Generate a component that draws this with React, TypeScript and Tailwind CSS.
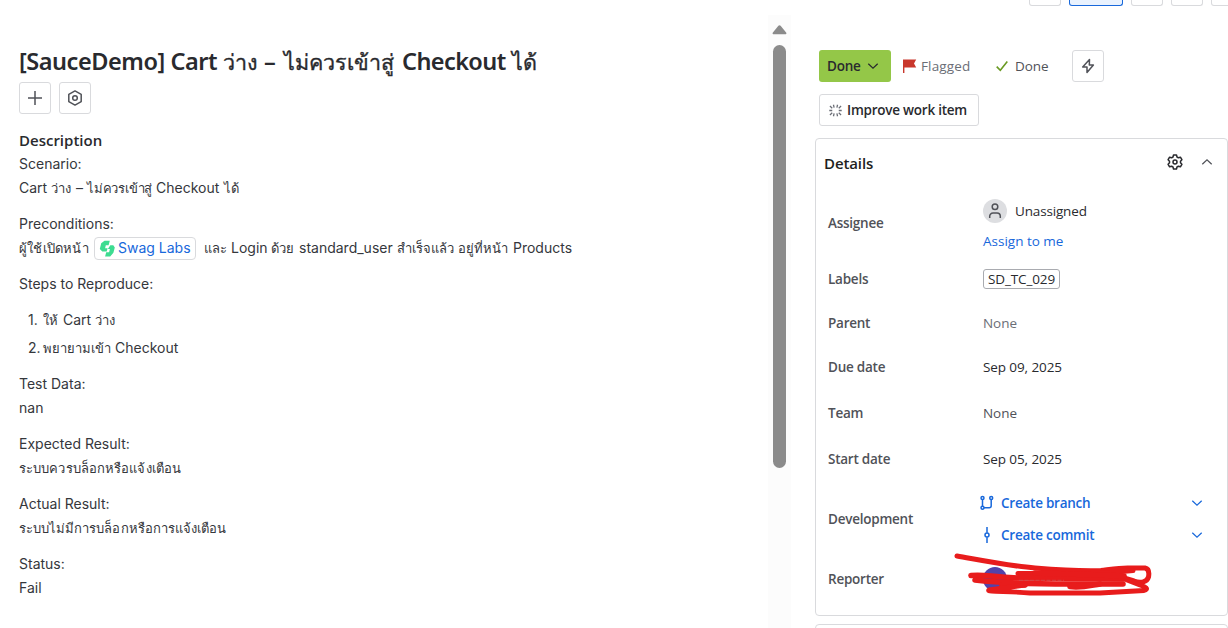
import type { ReactNode } from "react";

const ui = "font-['Open_Sans',sans-serif] text-[13.5px] tracking-[-0.04px]";
const strong = "font-['Open_Sans',sans-serif] text-[13.5px] font-semibold tracking-[-0.24px]";

function W({ w, th, children }: { w: string; th?: boolean; children: ReactNode }) {
  return (
    <span className={`inline-block whitespace-nowrap ${w} ${th ? "text-[13px] leading-none" : ""}`}>
      {children}
    </span>
  );
}

function Line({ children }: { children: ReactNode }) {
  return <p className="h-6 whitespace-nowrap leading-6">{children}</p>;
}

function TitleThai({ w, children }: { w: string; children: ReactNode }) {
  return (
    <span className={`inline-block whitespace-nowrap text-[21.5px] font-normal leading-none tracking-normal [-webkit-text-stroke:0.35px_#292a2e] ${w}`}>
      {children}
    </span>
  );
}

function Chevron({ up, className = "" }: { up?: boolean; className?: string }) {
  return (
    <svg viewBox="0 0 12 12" className={`size-3 ${className}`} fill="none" stroke="currentColor" strokeWidth="1.2">
      <path d={up ? "M1.3 8.3 6 3.8l4.700 4.500" : "M1.3 3.7 6 8.2l4.700-4.500"} />
    </svg>
  );
}

function Row({ label, h, children }: { label: string; h: string; children: ReactNode }) {
  return (
    <div className={`flex items-center ${h}`}>
      <div className={`w-[155px] shrink-0 text-[#505258] ${strong}`}>{label}</div>
      <div className={`min-w-0 flex-1 text-[#292a2e] ${ui}`}>{children}</div>
    </div>
  );
}

function Main() {
  return (
    <main className="w-[768px] shrink-0 pl-[19px] pt-[45px] font-['Inter',sans-serif] text-[14px] text-[#35373c]">
      <h1 className="h-8 whitespace-nowrap font-['Noto_Sans',sans-serif] text-[23.5px] font-semibold leading-8 tracking-[-0.45px] text-[#292a2e]">
        <span className="inline-block w-[204px]">[SauceDemo] Cart</span>
        <TitleThai w="w-[41px]">ว่าง</TitleThai>
        <span className="inline-block w-[20px]">–</span>
        <TitleThai w="w-[118px]">ไม่ควรเข้าสู่</TitleThai>
        <span className="inline-block w-[110px] tracking-[-0.6px]">Checkout</span>
        <TitleThai w="w-[30px]">ได้</TitleThai>
      </h1>
      <div className="mt-[5px] flex gap-2 text-[#505258]">
        <button className="flex size-8 items-center justify-center rounded-[3px] border border-[#d9dadd]">
          <svg viewBox="0 0 16 16" className="size-4" stroke="currentColor" strokeWidth="1.5">
            <path d="M8 1v14M1 8h14" />
          </svg>
        </button>
        <button className="flex size-8 items-center justify-center rounded-[3px] border border-[#d9dadd]">
          <svg viewBox="0 0 16 16" className="size-4" fill="none" stroke="currentColor" strokeWidth="1.5" strokeLinejoin="round">
            <path d="M8 .9 14.2 4.4v7.2L8 15.1 1.8 11.6V4.4z" />
            <circle cx="8" cy="8" r="2.3" />
          </svg>
        </button>
      </div>
      <h2 className="mt-[14px] h-6 font-['Open_Sans',sans-serif] text-[15px] font-semibold leading-6 text-[#292a2e]">Description</h2>
      <div>
        <Line>Scenario:</Line>
        <Line>
          <W w="w-[32px]">Cart</W>
          <W w="w-[25px]" th>ว่าง</W>
          <W w="w-[11px]">–</W>
          <span className="inline-block w-[69px] text-[13px] leading-none tracking-[-0.2px]">ไม่ควรเข้าสู่</span>
          <W w="w-[68px]">Checkout</W>
          <W w="w-[18px]" th>ได้</W>
        </Line>
      </div>
      <div className="mt-3">
        <Line>Preconditions:</Line>
        <div className="flex h-6 items-center whitespace-nowrap leading-6">
          <span className="inline-block w-[75px] text-[13px] leading-none tracking-[0.2px]">ผู้ใช้เปิดหน้า</span>
          <a className="flex h-[23px] w-[102px] items-center rounded-[4px] border border-[#d9dadd] pl-[4px] text-[#1868db]">
            <svg viewBox="0 0 17 17" className="mr-[2px] size-[17px] shrink-0 fill-[#3ddc91]">
              <path d="M5.500.8h5.300L9.600 5.200H6.800L6.100 8.200H8.600L7.700 11.600H3.300L.8 9 2.200 3.200z" />
              <path d="M11.300 5.200h3l1.500 2.200-1.400 5.300-3.200 3.800H6.100l1.100-4.300h2.900l.8-3.200H8.900z" />
            </svg>
            Swag Labs
          </a>
          <p className="ml-2">
            <W w="w-[27px]" th>และ</W>
            <W w="w-[40px]">Login</W>
            <W w="w-[28px]" th>ด้วย</W>
            <W w="w-[98px]">standard_user</W>
            <W w="w-[61px]" th>สำเร็จแล้ว</W>
            <W w="w-[55px]" th>อยู่ที่หน้า</W>
            <W w="w-[60px]">Products</W>
          </p>
        </div>
      </div>
      <div className="mt-3"><Line>Steps to Reproduce:</Line></div>
      <ol className="mt-3 pl-[9px]">
        <li className="flex h-6 items-baseline whitespace-nowrap leading-6">
          <W w="w-[15px]">1.</W>
          <W w="w-[20px]" th>ให้</W>
          <W w="w-[32px]">Cart</W>
          <W w="w-[22px]" th>ว่าง</W>
        </li>
        <li className="mt-1 flex h-6 items-baseline whitespace-nowrap leading-6">
          <W w="w-[15px]">2.</W>
          <W w="w-[72px]" th>พยายามเข้า</W>
          <W w="w-[64px]">Checkout</W>
        </li>
      </ol>
      <div className="mt-3"><Line>Test Data:</Line><Line>nan</Line></div>
      <div className="mt-3">
        <Line>Expected Result:</Line>
        <Line><span className="inline-block text-[13px] leading-none tracking-[0.1px]">ระบบควรบล็อกหรือแจ้งเตือน</span></Line>
      </div>
      <div className="mt-3">
        <Line>Actual Result:</Line>
        <Line><span className="inline-block text-[13px] leading-none tracking-[0.04px]">ระบบไม่มีการบล็อกหรือการแจ้งเตือน</span></Line>
      </div>
      <div className="mt-3"><Line>Status:</Line><Line>Fail</Line></div>
    </main>
  );
}

function ScrollTrack() {
  return (
    <div className="mt-[15px] flex w-[23px] shrink-0 flex-col items-center bg-[#fcfcfc] pt-[10px]">
      <svg viewBox="0 0 15 10" className="h-[10px] w-[15px] shrink-0 fill-[#8b8b8b]">
        <path d="M6.4.8a1.5 1.5 0 0 1 2.2 0l5.500 6.600c.7.9.2 1.800-.9 1.800H1.800C.7 9.200.2 8.300.9 7.400z" />
      </svg>
      <div className="mt-[10px] h-[423px] w-[13px] shrink-0 rounded-full bg-[#8b8b8b]" />
    </div>
  );
}

function TopButtons() {
  return (
    <div className="ml-[214px] flex h-[6px] gap-2">
      <div className="w-8 shrink-0 rounded-b-[3px] border border-t-0 border-[#d9dadd]" />
      <div className="w-[54px] shrink-0 rounded-b-[3px] border border-t-0 border-[#1868db] bg-[#e9f2fe]" />
      <div className="w-8 shrink-0 rounded-b-[3px] border border-t-0 border-[#d9dadd]" />
      <div className="w-8 shrink-0 rounded-b-[3px] border border-t-0 border-[#d9dadd]" />
      <div className="w-8 shrink-0 rounded-b-[3px] border border-t-0 border-[#d9dadd]" />
    </div>
  );
}

function StatusBar() {
  return (
    <div className="ml-1 mt-[44px]">
      <div className="flex h-8 items-center">
        <button className={`flex h-8 w-[72px] items-center rounded-[3px] bg-[#94c748] pl-2 text-[#292a2e] ${strong}`}>
          Done
          <Chevron className="ml-[6px]" />
        </button>
        <svg viewBox="0 0 14 15" className="ml-[12px] h-[15px] w-[14px] fill-[#c9372c]">
          <path d="M0 .5h13.200L11 4.500l2.200 3.900H1.400V14H0z" />
        </svg>
        <span className="ml-[4px] w-[75px] font-['Open_Sans',sans-serif] text-[13.5px] tracking-[0.15px] text-[#6b6e76]">Flagged</span>
        <svg viewBox="0 0 12 12" className="size-3 text-[#6a9a23]" fill="none" stroke="currentColor" strokeWidth="1.6">
          <path d="M.7 6.600 4.300 10.300 11.300 1.400" />
        </svg>
        <span className={`ml-[7px] w-[57px] text-[#505258] ${ui}`}>Done</span>
        <button className="flex size-8 items-center justify-center rounded-[3px] border border-[#d9dadd] text-[#505258]">
          <svg viewBox="0 0 16 16" className="size-4" fill="none" stroke="currentColor" strokeWidth="1.5" strokeLinejoin="round">
            <path d="M9.500 1.400 2.700 9H7v5.600L13.400 7.100H9.300z" />
          </svg>
        </button>
      </div>
      <button className={`mt-3 flex h-8 w-[160px] items-center rounded-[3px] border border-[#d9dadd] pl-[9px] text-[#292a2e] ${strong}`}>
        <svg viewBox="0 0 14 14" className="mr-[5px] size-[13px] text-[#6b6e76]" stroke="currentColor" strokeWidth="1.4">
          <path d="M4.800.8 5.500 4M9.200.8 8.500 4M4.800 13.200 5.500 10M9.200 13.200 8.500 10M1 2.200l2.500 2.300M13 2.200l-2.500 2.300M1 11.800l2.500-2.300M13 11.800l-2.500-2.300M.3 7h3.200M10.500 7h3.200" />
        </svg>
        Improve work item
      </button>
    </div>
  );
}

function DevLink({ label, children }: { label: string; children: ReactNode }) {
  return (
    <div className={`flex h-8 items-center text-[#1868db] ${strong}`}>
      <svg viewBox="0 0 16 16" className="-ml-1 mr-[6px] size-4" fill="none" stroke="currentColor" strokeWidth="1.5">
        {children}
      </svg>
      {label}
      <Chevron className="ml-auto mr-[24px]" />
    </div>
  );
}

function Details() {
  return (
    <section className="mt-3 h-[478px] w-[413px] rounded-[4px] border border-[#d9dadd] pl-3">
      <header className="flex h-14 items-center pb-[10px] text-[#292a2e]">
        <h2 className="-ml-1 mt-[2px] font-['Open_Sans',sans-serif] text-[15px] font-semibold tracking-[-0.1px] text-[#1e1f21]">Details</h2>
        <svg viewBox="0 0 16 16" className="ml-auto mr-[18px] size-4" fill="none" stroke="currentColor" strokeWidth="1.5" strokeLinejoin="round">
          <path d="M6.500 1h3l.5 2 1.400.8 2-.6 1.500 2.500L13.500 7.200v1.600l1.400 1.500-1.500 2.500-2-.6-1.400.8-.5 2h-3L6 13l-1.400-.8-2 .6-1.500-2.500L2.500 8.800V7.200L1.100 5.700l1.500-2.500 2 .6L6 3z" />
          <circle cx="8" cy="8" r="2" />
        </svg>
        <Chevron up className="mr-[14px] text-[#505258]" />
      </header>
      <Row label="Assignee" h="h-14">
        <div className="mt-1 flex h-6 items-center">
          <span className="mr-2 flex size-6 items-center justify-center rounded-full bg-[#dddee1] text-[#505258]">
            <svg viewBox="0 0 16 16" className="size-4" fill="none" stroke="currentColor" strokeWidth="1.5">
              <circle cx="8" cy="3.800" r="2.800" />
              <path d="M2.700 15v-1.700A3.300 3.300 0 0 1 6 10h4a3.300 3.300 0 0 1 3.300 3.300V15" />
            </svg>
          </span>
          <span className="tracking-[-0.16px]">Unassigned</span>
        </div>
        <a className="mt-2 block h-5 leading-5 tracking-normal text-[#1868db]">Assign to me</a>
      </Row>
      <Row label="Labels" h="h-14">
        <span className="flex h-5 w-[77px] items-center rounded-[3px] border border-[#a9abb0] pl-1 tracking-[-0.12px]">SD_TC_029</span>
      </Row>
      <Row label="Parent" h="h-8"><span className="text-[#6b6e76]">None</span></Row>
      <Row label="Due date" h="h-14"><span className="tracking-[-0.1px]">Sep 09, 2025</span></Row>
      <Row label="Team" h="h-9"><span className="text-[#505258]">None</span></Row>
      <Row label="Start date" h="h-14"><span className="tracking-[-0.1px]">Sep 05, 2025</span></Row>
      <Row label="Development" h="h-16">
        <DevLink label="Create branch">
          <circle cx="3.500" cy="3" r="1.500" />
          <circle cx="12.200" cy="3" r="1.500" />
          <circle cx="3.500" cy="12.700" r="1.500" />
          <path d="M3.500 4.500v6.700M12.200 4.500v6.200a2 2 0 0 1-2 2H5" />
        </DevLink>
        <DevLink label="Create commit">
          <path d="M8 0v5.700M8 10.300V16" />
          <circle cx="8" cy="8" r="2" />
        </DevLink>
      </Row>
      <Row label="Reporter" h="h-14">
        <div className="relative h-6">
          <div className="size-6 rounded-full bg-[#5243aa]" />
          <svg viewBox="950 550 210 50" className="absolute left-[-33px] top-[-17px] h-[50px] w-[210px]" fill="none" stroke="#e81c1c" strokeWidth="5.600" strokeLinecap="round" strokeLinejoin="round">
            <path d="M957 556C980 560 1010 566 1035 568S1085 571 1101 570.500C1113 569 1122 567.500 1130 568H1145C1150 569 1149 574 1148.500 577C1147 582 1141 583.500 1134 581L1124 578" strokeWidth="5" />
            <path d="M971 575.500C985 574 990 577 1018 578L1124 579" />
            <path d="M975 580C1000 583 1040 584 1070 584L1123 584" />
            <path d="M1018 573.500H1060L1100 573.500L1133 570.500" strokeWidth="5" />
            <path d="M1035 573L1100 575L1124 576" />
            <path d="M1002 585L1025 585M1070 586.500C1082 588 1092 585 1100 584" />
            <path d="M1025 585L989 590C985 592 1010 591 1030 593H1100L1144 590.500C1149 589 1146 587 1140 585L1127 580" strokeWidth="4.800" />
            <path d="M1019 580.300H1064" stroke="#c84f4f" strokeWidth="0.800" strokeDasharray="4 1.500" strokeLinecap="butt" />
          </svg>
        </div>
      </Row>
    </section>
  );
}

export default function App() {
  return (
    <div className="flex h-[628px] w-[1228px] overflow-hidden bg-white">
      <Main />
      <ScrollTrack />
      <aside className="ml-6 w-[413px] shrink-0 overflow-hidden">
        <TopButtons />
        <StatusBar />
        <Details />
        <div className="mt-[8px] h-8 w-[413px] rounded-[4px] border border-[#d9dadd]" />
      </aside>
    </div>
  );
}
